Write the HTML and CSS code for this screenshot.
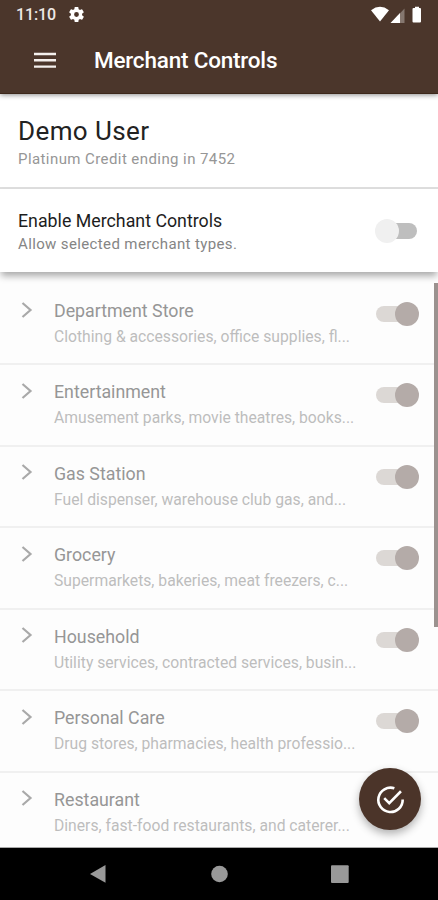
FILE: index.html
```html
<!DOCTYPE html>
<html lang="en">
<head>
<meta charset="utf-8">
<title>Merchant Controls</title>
<link rel="stylesheet" href="styles.css">
</head>
<body>
<div class="screen">
  <header class="top">
    <div class="status">
      <span class="time">11:10</span>
      <svg class="gear" viewBox="2 2 20 20"><path fill="#fff" fill-rule="evenodd" d="M19.4 13a7.500 7.500 0 0 0 0-2l2.100-1.650a.5.5 0 0 0 .12-.64l-2-3.460a.5.5 0 0 0-.61-.22l-2.490 1a7.300 7.300 0 0 0-1.690-.98l-.38-2.650A.5.5 0 0 0 14 2h-4a.5.5 0 0 0-.49.420l-.38 2.650c-.61.25-1.170.59-1.690.98l-2.490-1a.5.5 0 0 0-.61.22l-2 3.460a.5.5 0 0 0 .12.64L4.600 11a7.500 7.500 0 0 0 0 2l-2.110 1.650a.5.5 0 0 0-.12.640l2 3.460c.12.22.39.3.61.22l2.490-1c.52.4 1.080.73 1.690.98l.38 2.650c.03.24.24.4.49.4h4c.25 0 .46-.18.49-.42l.38-2.650c.61-.25 1.170-.59 1.690-.98l2.490 1c.23.09.49 0 .61-.22l2-3.460a.5.5 0 0 0-.12-.64zM12 15.200a3.200 3.200 0 1 1 0-6.400 3.200 3.200 0 0 1 0 6.400z"/></svg>
      <svg class="signals" viewBox="0 0 54 18"><path fill="#fff" d="M1 4.200Q10 -2.600 19 4.200L10 15.500Z"/><path fill="#85776f" d="M34.500 2.500V17H21Z"/><path fill="#fff" d="M30 7V17H20.500Z"/><path fill="#fff" d="M43.500 2H45V.8H49V2H50Q51 2 51 3V15.500Q51 16.500 50 16.500H43.500Q42.500 16.500 42.500 15.500V3Q42.500 2 43.500 2Z"/></svg>
    </div>
    <div class="appbar">
      <svg class="menu" viewBox="0 0 22 17"><path d="M0 2H22M0 8.300H22M0 14.600H22" stroke="#f4f0ed" stroke-width="2.400"/></svg>
      <h1>Merchant Controls</h1>
    </div>
  </header>
  <section class="account">
    <h2>Demo User</h2>
    <p>Platinum Credit ending in 7452</p>
  </section>
  <section class="enable">
    <div class="enable-text">
      <h3>Enable Merchant Controls</h3>
      <p>Allow selected merchant types.</p>
    </div>
    <span class="switch off"></span>
  </section>
  <main class="list">
    <div class="row"><svg class="chev" viewBox="0 0 12 16"><path d="M1.500 1L9.500 8L1.500 15"/></svg><div class="txt"><h4>Department Store</h4><p>Clothing &amp; accessories, office supplies, fl...</p></div><span class="switch on"></span></div>
    <div class="row"><svg class="chev" viewBox="0 0 12 16"><path d="M1.500 1L9.500 8L1.500 15"/></svg><div class="txt"><h4>Entertainment</h4><p>Amusement parks, movie theatres, books...</p></div><span class="switch on"></span></div>
    <div class="row"><svg class="chev" viewBox="0 0 12 16"><path d="M1.500 1L9.500 8L1.500 15"/></svg><div class="txt"><h4>Gas Station</h4><p>Fuel dispenser, warehouse club gas, and...</p></div><span class="switch on"></span></div>
    <div class="row"><svg class="chev" viewBox="0 0 12 16"><path d="M1.500 1L9.500 8L1.500 15"/></svg><div class="txt"><h4>Grocery</h4><p>Supermarkets, bakeries, meat freezers, c...</p></div><span class="switch on"></span></div>
    <div class="row"><svg class="chev" viewBox="0 0 12 16"><path d="M1.500 1L9.500 8L1.500 15"/></svg><div class="txt"><h4>Household</h4><p>Utility services, contracted services, busin...</p></div><span class="switch on"></span></div>
    <div class="row"><svg class="chev" viewBox="0 0 12 16"><path d="M1.500 1L9.500 8L1.500 15"/></svg><div class="txt"><h4>Personal Care</h4><p>Drug stores, pharmacies, health professio...</p></div><span class="switch on"></span></div>
    <div class="row"><svg class="chev" viewBox="0 0 12 16"><path d="M1.500 1L9.500 8L1.500 15"/></svg><div class="txt"><h4>Restaurant</h4><p>Diners, fast-food restaurants, and caterer...</p></div></div>
    <div class="scrollbar"></div>
  </main>
  <button class="fab" aria-label="Save"><svg viewBox="0 0 30 30"><g fill="none" stroke="#fff" stroke-width="2.700"><path d="M19 3.400A12.600 12.600 0 1 0 27.600 15"/><path d="M8.500 13.500L13.700 18.700L25.800 6.500"/></g></svg></button>
  <nav class="nav">
    <svg viewBox="0 0 438 53"><path fill="#999" d="M90 25.900L105.500 17V34.800Z"/><circle cx="219.500" cy="26" r="8.300" fill="#999"/><rect x="331" y="17.200" width="17.700" height="17.700" rx="1" fill="#999"/></svg>
  </nav>
</div>
</body>
</html>
```
FILE: styles.css
```css
* { box-sizing: border-box; }
body { margin: 0; font-family: Roboto, "Liberation Sans", sans-serif; background: #fdfdfd; }
h1, h2, h3, h4, p { margin: 0; font-weight: 400; white-space: nowrap; }
.screen { position: relative; width: 438px; height: 900px; display: flex; flex-direction: column; overflow: hidden; }
.top { height: 94px; flex: none; background: #4b362b; border-bottom: 1px solid #3d281b; color: #fff; z-index: 3; box-shadow: 0 1px 5px rgba(0,0,0,.45); }
.status { height: 28px; display: flex; align-items: center; padding: 1px 14px 0 16px; }
.time { font-size: 16px; font-weight: 500; color: #eee8e5; letter-spacing: -.15px; width: 53px; line-height: 28px; }
.gear { width: 15px; height: 15px; }
.signals { width: 54px; height: 18px; margin-left: auto; }
.appbar { height: 65px; display: flex; align-items: center; padding-left: 34px; }
.menu { width: 22px; height: 17px; }
.appbar h1 { margin: -2px 0 0 38px; font-size: 22.500px; font-weight: 500; line-height: 32px; letter-spacing: -.2px; }
.account { height: 95px; flex: none; background: #fff; border-bottom: 2px solid #dedede; padding: 21px 18px 0; }
.account h2 { font-size: 26px; line-height: 32px; color: #222; letter-spacing: .4px; }
.account p { font-size: 15px; line-height: 20px; margin-top: 2px; color: #969696; letter-spacing: .42px; }
.enable { height: 83px; flex: none; background: #fff; display: flex; padding: 20px 20px 0 18px; z-index: 2; box-shadow: 0 5px 7px -1px rgba(0,0,0,.33); }
.enable-text { flex: 1; }
.enable h3 { font-size: 17.800px; line-height: 24px; color: #1d1d1d; }
.enable p { font-size: 15px; line-height: 20px; margin-top: 1px; color: #858585; letter-spacing: .37px; }
.switch { flex: none; display: block; width: 42px; height: 24px; position: relative; }
.switch::before { content: ""; position: absolute; left: 0; top: 4px; width: 40px; height: 16px; border-radius: 8px; background: #dcd8d5; }
.switch::after { content: ""; position: absolute; right: -1px; top: 0; width: 24px; height: 24px; border-radius: 50%; background: #b4aba8; }
.off { margin-top: 10px; }
.off::before { left: 10px; top: 4px; width: 31px; background: #bebebe; }
.off::after { left: -1px; top: 0; background: #f0f0f0; }
.list { position: relative; flex: 1; min-height: 0; overflow: hidden; padding-top: 12px; background: #fdfdfd; border-bottom: 1px solid #a9a9a9; }
.row { height: 81.450px; border-bottom: 2px solid #f0f0f0; display: flex; padding: 15px 20px 0 20px; }
.chev { width: 12px; height: 16px; margin: 2.500px 23px 0 1px; flex: none; overflow: visible; fill: none; stroke: #a9a9a9; stroke-width: 2.200; }
.txt { flex: 1; min-width: 0; margin-left: -2px; }
.row h4 { font-size: 17.800px; line-height: 24px; color: #969696; }
.row p { font-size: 15.700px; line-height: 22px; margin-top: 3px; color: #bdbdbd; }
.row .switch { margin-top: 3px; }
.scrollbar { position: absolute; right: 0; top: 11px; width: 4px; height: 344px; background: #9b928f; }
.fab { position: absolute; left: 359px; top: 768px; width: 62px; height: 62px; padding: 0; border: 0; border-radius: 50%; background: #4b3429; display: flex; align-items: center; justify-content: center; z-index: 4; box-shadow: 0 4px 9px rgba(0,0,0,.3); }
.fab svg { width: 29px; height: 29px; }
.nav { height: 52px; flex: none; background: #000; }
.nav svg { display: block; width: 438px; height: 53px; }
```
